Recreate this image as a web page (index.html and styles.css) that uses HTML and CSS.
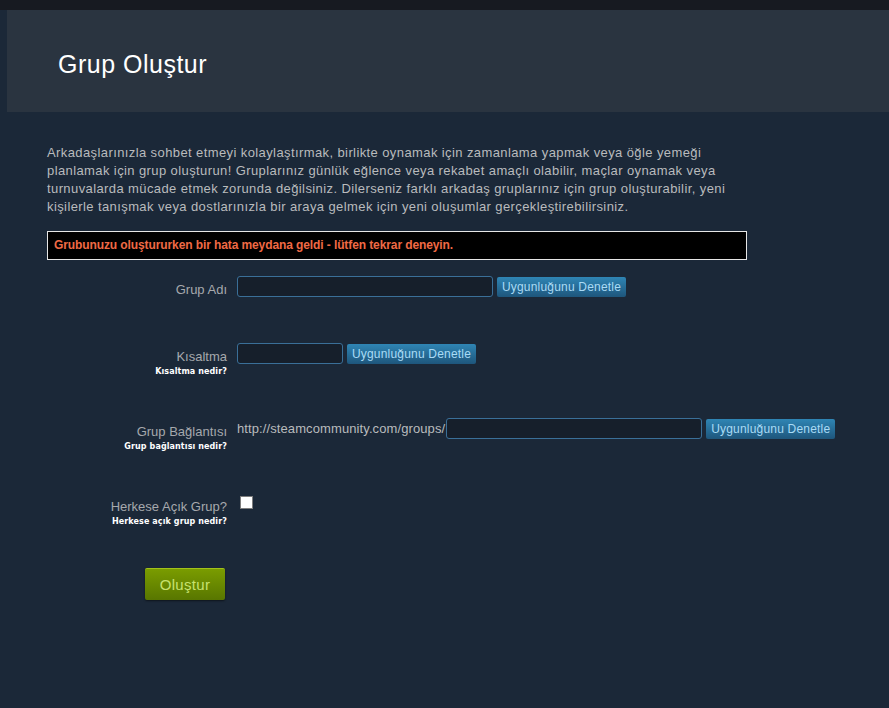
FILE: index.html
```html
<!DOCTYPE html>
<html>

<head>
  <meta charset="utf-8">
  <link rel="stylesheet" href="styles.css">
</head>

<body>
  <div class="topbar"></div>
  <div class="page">
    <div class="header">
      <h1>Grup Oluştur</h1>
    </div>

    <div class="content">
      <p class="intro">Arkadaşlarınızla sohbet etmeyi kolaylaştırmak, birlikte oynamak için zamanlama yapmak veya öğle yemeği planlamak için grup oluşturun! Gruplarınız günlük eğlence veya rekabet amaçlı olabilir, maçlar oynamak veya turnuvalarda mücade etmek zorunda değilsiniz. Dilerseniz farklı arkadaş gruplarınız için grup oluşturabilir, yeni kişilerle tanışmak veya dostlarınızla bir araya gelmek için yeni oluşumlar gerçekleştirebilirsiniz.</p>

      <div class="error">Grubunuzu oluştururken bir hata meydana geldi - lütfen tekrar deneyin.</div>

      <div class="row row-name">
        <div class="label">Grup Adı</div>
        <div class="field">
          <input type="text" class="txt txt-long">
          <button class="check">Uygunluğunu Denetle</button>
        </div>
      </div>

      <div class="row row-abbr">
        <div class="label">Kısaltma<span class="help">Kısaltma nedir?</span></div>
        <div class="field">
          <input type="text" class="txt txt-short">
          <button class="check">Uygunluğunu Denetle</button>
        </div>
      </div>

      <div class="row row-url">
        <div class="label">Grup Bağlantısı<span class="help">Grup bağlantısı nedir?</span></div>
        <div class="field">
          <span class="url">http://steamcommunity.com/groups/</span><input type="text" class="txt txt-long">
          <button class="check">Uygunluğunu Denetle</button>
        </div>
      </div>

      <div class="row row-public">
        <div class="label">Herkese Açık Grup?<span class="help">Herkese açık grup nedir?</span></div>
        <div class="field">
          <span class="box"></span>
        </div>
      </div>

      <div class="row row-submit">
        <div class="label"><button class="create">Oluştur</button></div>
      </div>
    </div>
  </div>
</body>

</html>
```

FILE: styles.css
```css
body {
  margin: 0;
  background-color: #1b2838;
  font-family: "Liberation Sans", Arial, sans-serif;
  height: 708px;
  overflow: hidden;
}

.topbar {
  height: 10px;
  background-color: #171a21;
}

.page {
  padding-left: 7px;
}

.header {
  background-color: #2a3440;
  height: 102px;
  box-sizing: border-box;
  padding: 39px 0 0 51px;
}

h1 {
  margin: 0;
  font-size: 25px;
  font-weight: normal;
  letter-spacing: 0.5px;
  color: #ffffff;
  line-height: 30px;
}

.content {
  padding: 32px 0 0 40px;
  width: 700px;
}

.intro {
  margin: 0;
  font-size: 13px;
  letter-spacing: 0.4px;
  line-height: 18px;
  color: #b9bbbd;
}

.error {
  margin-top: 15px;
  border: 1px solid #e6e6e6;
  background-color: #000000;
  color: #f06a45;
  font-size: 12px;
  font-weight: bold;
  letter-spacing: -0.1px;
  height: 27px;
  line-height: 27px;
  padding-left: 6px;
}

.row {
  display: flex;
  align-items: flex-start;
}

.label {
  width: 180px;
  flex: none;
  text-align: right;
  font-size: 13px;
  color: #a6a9ad;
  line-height: 16px;
  padding-top: 7px;
}

.help {
  display: block;
  margin-top: 1px;
  font-family: "DejaVu Sans", Verdana, sans-serif;
  font-size: 8px;
  font-weight: bold;
  color: #ffffff;
  line-height: 12px;
  letter-spacing: 0.1px;
}

.field {
  display: flex;
  align-items: center;
  margin-left: 10px;
  white-space: nowrap;
}

.txt {
  box-sizing: border-box;
  height: 21px;
  background-color: #161f2b;
  border: 1px solid #3a6f98;
  border-radius: 3px;
  padding: 0 4px;
  color: #ffffff;
  outline: none;
}

.txt-long {
  width: 256px;
}

.txt-short {
  width: 106px;
}

.check {
  margin-left: 4px;
  margin-top: 2px;
  width: 129px;
  height: 20px;
  padding: 0;
  border: none;
  border-radius: 2px;
  background: linear-gradient(to bottom, #2f85b4, #1e567c);
  color: #a9dbf6;
  font-family: "Liberation Sans", Arial, sans-serif;
  font-size: 12px;
  letter-spacing: 0.2px;
  cursor: pointer;
}

.url {
  font-size: 13px;
  letter-spacing: 0.1px;
  color: #b9bbbd;
  margin-right: 1px;
}

.row-name {
  margin-top: 15px;
}

.row-abbr {
  margin-top: 44px;
}

.row-url {
  margin-top: 39px;
}

.row-public {
  margin-top: 43px;
}

.row-public .label {
  padding-top: 3px;
}

.box {
  display: block;
  width: 11px;
  height: 11px;
  margin: 0 0 0 3px;
  background-color: #ffffff;
  border: 1px solid #7d7d7d;
}

.row-submit {
  margin-top: 40px;
}

.create {
  width: 80px;
  height: 32px;
  padding: 0;
  border: none;
  border-top: 1px solid #a2c21a;
  border-radius: 2px;
  background: linear-gradient(to bottom, #7a9c00, #587600);
  box-shadow: 0 1px 2px rgba(0, 0, 0, 0.5);
  color: #c7e26f;
  font-family: "Liberation Sans", Arial, sans-serif;
  font-size: 15px;
  letter-spacing: 0.3px;
  cursor: pointer;
}

.row-submit .label {
  padding-top: 0;
  margin-left: -2px;
}
```
